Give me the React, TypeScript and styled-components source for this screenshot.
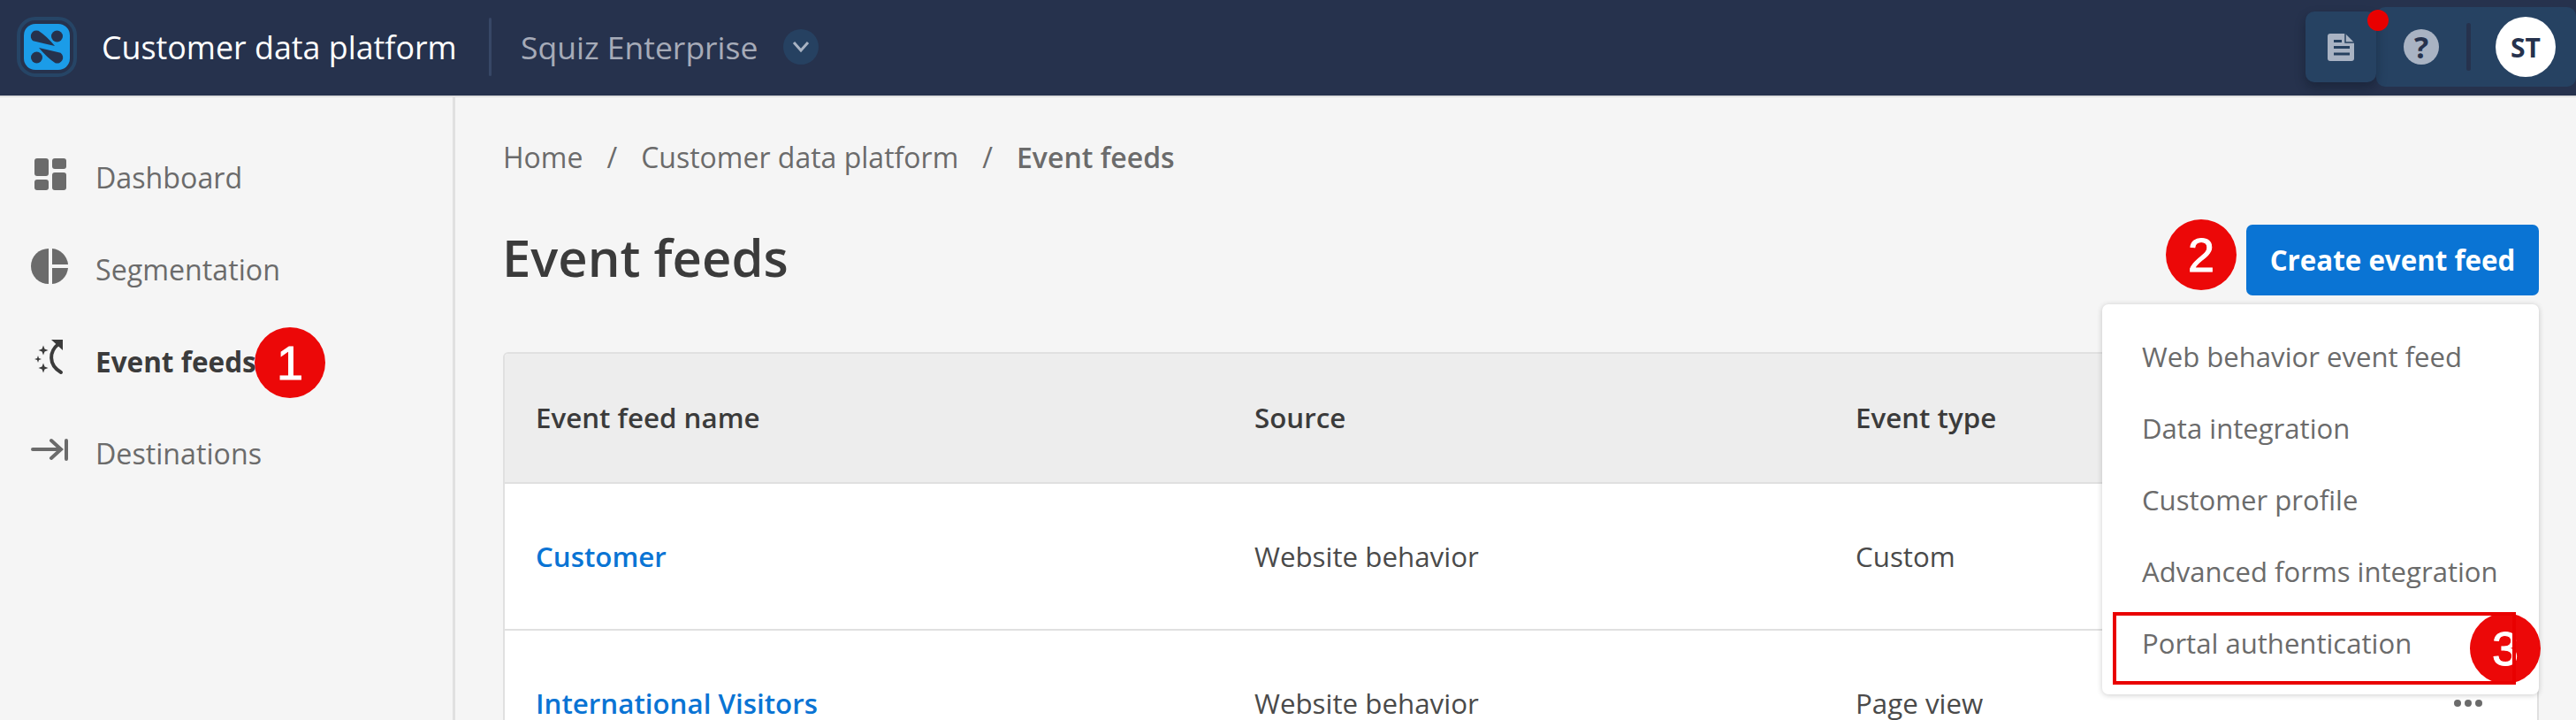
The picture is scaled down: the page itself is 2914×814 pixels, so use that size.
import React from "react";
import styled, { createGlobalStyle } from "styled-components";

const Global = createGlobalStyle`
  html, body { margin: 0; padding: 0; background: #f5f5f5; }
  body { font-family: "Open Sans", "Liberation Sans", sans-serif; overflow: hidden; }
  * { box-sizing: border-box; }
`;
const Page = styled.div`
  width: 2914px; height: 814px; overflow: hidden; position: relative; display: flex; flex-direction: column;
`;
const Header = styled.header`
  height: 110px; flex: none; background: #26324d; border-bottom: 2px solid #e0e0e0;
  display: flex; align-items: center; padding: 0 0 2px 19px;
`;
const Logo = styled.svg`width: 68px; height: 68px; flex: none;`;
const AppName = styled.div`
  margin-left: 28px; font-size: 35.800px; font-weight: 500; color: #fff; white-space: nowrap; width: 438px;
`;
const HeaderRule = styled.div`width: 3px; height: 66px; background: #374766; border-radius: 2px; flex: none;`;
const Tenant = styled.div`
  margin-left: 33px; font-size: 35.500px; color: #a6abb8; white-space: nowrap; font-weight: 500;
`;
const ChevronCircle = styled.div`
  margin-left: 29px; width: 40px; height: 40px; border-radius: 50%; background: #264161;
  display: flex; align-items: center; justify-content: center; flex: none;
`;
const HeaderSpacer = styled.div`flex: 1;`;
const DocButton = styled.div`
  width: 80px; height: 80px; background: #264262; border-radius: 10px; position: relative; flex: none;
  display: flex; align-items: center; justify-content: center; box-shadow: 0 6px 12px rgba(10,16,30,.35);
`;
const RedDot = styled.span`
  position: absolute; right: -14px; top: -2px; width: 24px; height: 24px; border-radius: 50%; background: #e90000;
`;
const UserPill = styled.div`
  width: 226px; height: 90px; background: #264262; border-radius: 10px; display: flex; align-items: center; flex: none;
  padding-left: 31px;
`;
const HelpCircle = styled.div`
  width: 40px; height: 40px; border-radius: 50%; background: #a9b3c3; color: #26324d; flex: none;
  font-size: 34px; font-weight: 700; display: flex; align-items: center; justify-content: center; line-height: 1;
`;
const PillRule = styled.div`width: 5px; height: 54px; background: #26324d; border-radius: 3px; margin-left: 31px; flex: none;`;
const Avatar = styled.div`
  width: 68px; height: 68px; border-radius: 50%; background: #fff; color: #26324d; margin-left: 28px; flex: none;
  font-size: 30px; font-weight: 700; display: flex; align-items: center; justify-content: center;
`;
const Body = styled.div`flex: 1; display: flex; min-height: 0; position: relative;`;
const Sidebar = styled.nav`
  width: 515px; flex: none; border-right: 3px solid #e0e0e0; padding: 38px 0 0 0; display: flex; flex-direction: column;
`;
const NavItem = styled.div<{ $active?: boolean }>`
  height: 104px; display: flex; align-items: center; position: relative; padding-left: 108px;
  font-size: ${p => (p.$active ? 31.5 : 32.2)}px; font-weight: ${p => (p.$active ? 700 : 500)};
  color: ${p => (p.$active ? "#3b3b3b" : "#6b6b6b")};
`;
const NavIcon = styled.svg`position: absolute; left: 30px; top: 22px; width: 50px; height: 50px;`;
const Main = styled.main`flex: 1; min-width: 0; padding: 0 42px 0 54px; display: flex; flex-direction: column;`;
const Crumbs = styled.div`
  height: 44px; margin-top: 45px; display: flex; align-items: center; font-size: 32px; color: #6b6b6b; white-space: nowrap; flex: none;
`;
const CrumbSep = styled.span`margin: 0 27px;`;
const CrumbNow = styled.span`font-weight: 600;`;
const TitleRow = styled.div`height: 80px; margin-top: 55px; display: flex; align-items: center; justify-content: space-between; flex: none;`;
const Title = styled.h1`margin: 0 0 6px -1px; font-size: 58px; font-weight: 600; color: #3b3b3b; line-height: 80px;`;
const CreateButton = styled.button`
  width: 331px; height: 80px; background: #0a74d4; border: 0; border-radius: 7px; color: #fff;
  font: 700 31.300px "Open Sans", sans-serif;
`;
const TableBox = styled.div`
  margin-top: 64px; flex: none; background: #fff; border: 2px solid #e0e0e0; border-bottom: 0;
  border-radius: 6px 6px 0 0; overflow: hidden;
`;
const TableRow = styled.div<{ $head?: boolean }>`
  display: grid; grid-template-columns: 848px 680px 677px 32px 1fr;
  height: ${p => (p.$head ? 147 : 166)}px; align-items: center; line-height: 1.1;
  background: ${p => (p.$head ? "#ededed" : "#fff")};
  border-bottom: 2px solid #e0e0e0;
  font-size: 31.300px; color: ${p => (p.$head ? "#3b3b3b" : "#4a4a4a")}; font-weight: ${p => (p.$head ? 600 : 400)};
`;
const Cell = styled.div`white-space: nowrap;`;
const NameCell = styled(Cell)`padding-left: 35px;`;
const LinkText = styled.a`color: #0a74d4; font-weight: 600;`;
const Dots = styled.div`display: flex; justify-content: space-between; width: 32px;`;
const Dot = styled.i`width: 8px; height: 8px; border-radius: 50%; background: #6b6b6b;`;
const Menu = styled.div`
  position: absolute; left: 2378px; top: 234px; width: 494px; height: 441px; background: #fff; border-radius: 7px;
  box-shadow: 0 1px 6px rgba(0,0,0,.2); padding: 18px 0 0 45px; display: flex; flex-direction: column;
`;
const MenuItem = styled.div`height: 81px; display: flex; align-items: center; font-size: 31.100px; color: #6b6b6b; white-space: nowrap;`;
const Badge = styled.div<{ $x: number; $y: number }>`
  position: absolute; left: ${p => p.$x}px; top: ${p => p.$y}px; width: 80px; height: 80px; border-radius: 50%;
  background: #ec0808; color: #fff; font: 400 54px "Liberation Sans", Arial, sans-serif;
  -webkit-text-stroke: 1px #fff;
  display: flex; align-items: center; justify-content: center;
`;
const Callout = styled.div`
  position: absolute; left: 2390px; top: 582px; width: 456px; height: 82px; border: 4px solid #e90000;
`;

const iconColor = "#6b6b6b";
const drop = "M24.5 15.800Q34 22 43 33Q30 30 18.500 27.200A6.500 6.500 0 0 1 24.500 15.800z";
export default function App() {
  return (
    <Page>
      <Global />
      <Header>
        <Logo viewBox="0 0 68 68">
          <rect x="2" y="2" width="64" height="64" rx="19" fill="none" stroke="#264566" strokeWidth="4" />
          <rect x="8" y="8" width="52" height="52" rx="13" fill="#1b9ce8" />
          <path d={drop} fill="#26324d" />
          <path d={drop} fill="#26324d" transform="rotate(180 34 34)" />
          <circle cx="45.500" cy="22" r="6.500" fill="#26324d" />
          <circle cx="22.500" cy="46" r="6.500" fill="#26324d" />
        </Logo>
        <AppName>Customer data platform</AppName>
        <HeaderRule />
        <Tenant>Squiz Enterprise</Tenant>
        <ChevronCircle>
          <svg width="22" height="14" viewBox="0 0 22 14"><path d="M3 2l8 9 8-9" fill="none" stroke="#a9b3c3" strokeWidth="3" /></svg>
        </ChevronCircle>
        <HeaderSpacer />
        <DocButton>
          <svg width="30" height="31" viewBox="0 0 30 31">
            <path d="M3 0h17l10 10v18a3 3 0 0 1-3 3H3a3 3 0 0 1-3-3V3a3 3 0 0 1 3-3z" fill="#a9b3c3" />
            <path d="M7 8.500h9M7 15.500h18M7 23h18" stroke="#26405f" strokeWidth="3" />
            <path d="M20 0v10h10" fill="none" stroke="#26405f" strokeWidth="1.500" />
          </svg>
          <RedDot />
        </DocButton>
        <UserPill>
          <HelpCircle>?</HelpCircle>
          <PillRule />
          <Avatar>ST</Avatar>
        </UserPill>
      </Header>
      <Body>
        <Sidebar>
          <NavItem>
            <NavIcon viewBox="0 0 50 50">
              <g fill={iconColor}>
                <rect x="9" y="9" width="16" height="20" rx="3" />
                <rect x="9" y="33" width="16" height="12" rx="3" />
                <rect x="29" y="9" width="16" height="12" rx="3" />
                <rect x="29" y="25" width="16" height="20" rx="3" />
              </g>
            </NavIcon>
            Dashboard
          </NavItem>
          <NavItem>
            <NavIcon viewBox="0 0 50 50">
              <g fill={iconColor}>
                <path d="M25 7v40A20 20 0 0 1 25 7z" />
                <path d="M29 7A20 20 0 0 1 47 25H29z" />
                <path d="M29 29H47A20 20 0 0 1 29 47z" />
              </g>
            </NavIcon>
            Segmentation
          </NavItem>
          <NavItem $active>
            Event feeds
            <NavIcon viewBox="0 0 50 50">
              <g fill="#3b3b3b">
                <path d="M19 12.500l1.500 4 4 1.500-4 1.500-1.500 4-1.500-4-4-1.500 4-1.500z" />
                <path d="M13 24l1 3 3 1-3 1-1 3-1-3-3-1 3-1z" />
                <path d="M19 32.500l1.500 4 4 1.500-4 1.500-1.500 4-1.500-4-4-1.500 4-1.500z" />
                <path d="M28 6h13v12z" />
              </g>
              <path d="M36 11C26 19 24 34 39 43" fill="none" stroke="#3b3b3b" strokeWidth="4" strokeLinecap="round" />
            </NavIcon>
          </NavItem>
          <NavItem>
            <NavIcon viewBox="0 0 50 50">
              <g fill="none" stroke={iconColor} strokeWidth="4" strokeLinecap="round">
                <path d="M7 26H38M28 16l11 10-11 10M45 16v21" />
              </g>
            </NavIcon>
            Destinations
          </NavItem>
        </Sidebar>
        <Main>
          <Crumbs>
            Home<CrumbSep>/</CrumbSep>Customer data platform<CrumbSep>/</CrumbSep><CrumbNow>Event feeds</CrumbNow>
          </Crumbs>
          <TitleRow>
            <Title>Event feeds</Title>
            <CreateButton>Create event feed</CreateButton>
          </TitleRow>
          <TableBox>
            <TableRow $head>
              <NameCell>Event feed name</NameCell>
              <Cell>Source</Cell>
              <Cell>Event type</Cell>
            </TableRow>
            <TableRow>
              <NameCell><LinkText>Customer</LinkText></NameCell>
              <Cell>Website behavior</Cell>
              <Cell>Custom</Cell>
            </TableRow>
            <TableRow>
              <NameCell><LinkText>International Visitors</LinkText></NameCell>
              <Cell>Website behavior</Cell>
              <Cell>Page view</Cell>
              <Dots><Dot /><Dot /><Dot /></Dots>
            </TableRow>
          </TableBox>
        </Main>
        <Menu>
          <MenuItem>Web behavior event feed</MenuItem>
          <MenuItem>Data integration</MenuItem>
          <MenuItem>Customer profile</MenuItem>
          <MenuItem>Advanced forms integration</MenuItem>
          <MenuItem>Portal authentication</MenuItem>
        </Menu>
        <Badge $x={288} $y={260}>1</Badge>
        <Badge $x={2450} $y={138}>2</Badge>
        <Badge $x={2794} $y={583}>3</Badge>
        <Callout />
      </Body>
    </Page>
  );
}
